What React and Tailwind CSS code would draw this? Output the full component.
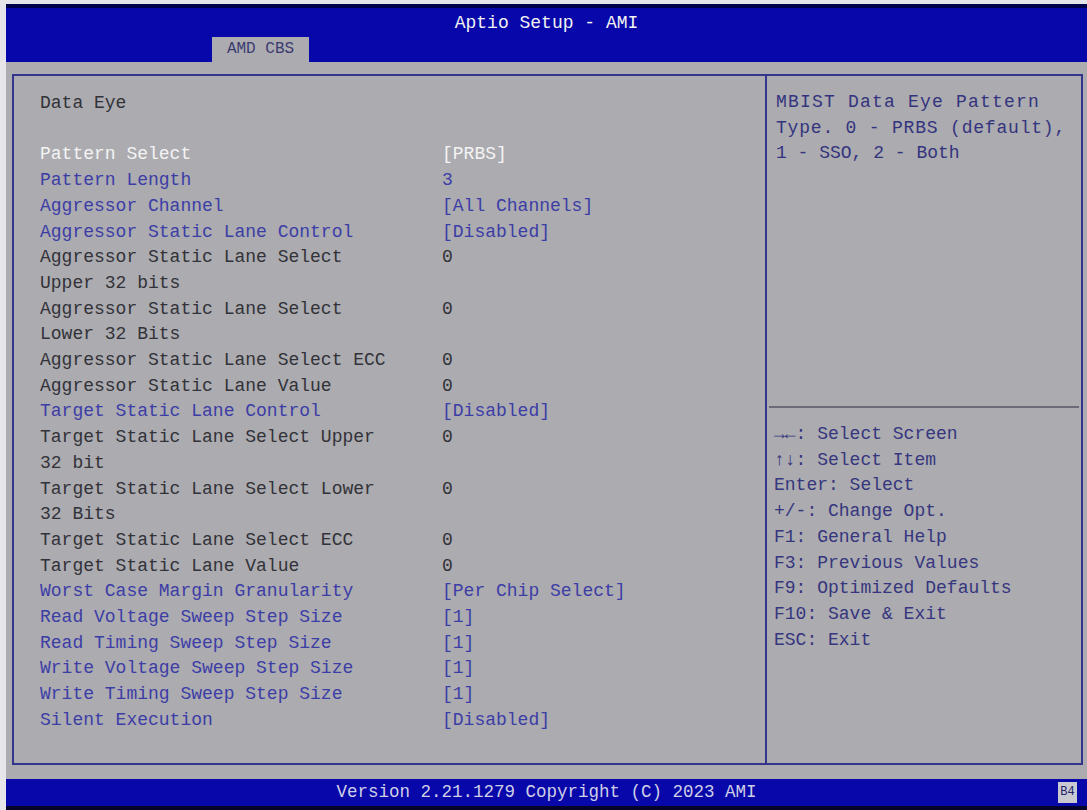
import React from "react";

const rows = [
  { l: "Pattern Select", v: "[PRBS]", c: "sel" },
  { l: "Pattern Length", v: "3", c: "blue" },
  { l: "Aggressor Channel", v: "[All Channels]", c: "blue" },
  { l: "Aggressor Static Lane Control", v: "[Disabled]", c: "blue" },
  { l: "Aggressor Static Lane Select", v: "0", c: "dark" },
  { l: "Upper 32 bits", v: "", c: "dark" },
  { l: "Aggressor Static Lane Select", v: "0", c: "dark" },
  { l: "Lower 32 Bits", v: "", c: "dark" },
  { l: "Aggressor Static Lane Select ECC", v: "0", c: "dark" },
  { l: "Aggressor Static Lane Value", v: "0", c: "dark" },
  { l: "Target Static Lane Control", v: "[Disabled]", c: "blue" },
  { l: "Target Static Lane Select Upper", v: "0", c: "dark" },
  { l: "32 bit", v: "", c: "dark" },
  { l: "Target Static Lane Select Lower", v: "0", c: "dark" },
  { l: "32 Bits", v: "", c: "dark" },
  { l: "Target Static Lane Select ECC", v: "0", c: "dark" },
  { l: "Target Static Lane Value", v: "0", c: "dark" },
  { l: "Worst Case Margin Granularity", v: "[Per Chip Select]", c: "blue" },
  { l: "Read Voltage Sweep Step Size", v: "[1]", c: "blue" },
  { l: "Read Timing Sweep Step Size", v: "[1]", c: "blue" },
  { l: "Write Voltage Sweep Step Size", v: "[1]", c: "blue" },
  { l: "Write Timing Sweep Step Size", v: "[1]", c: "blue" },
  { l: "Silent Execution", v: "[Disabled]", c: "blue" },
];

const colorClass = {
  sel: "text-[#f4f4f4]",
  blue: "text-[#3d3da6]",
  dark: "text-[#323238]",
};

const help = [
  "\u2192\u2190: Select Screen",
  "\u2191\u2193: Select Item",
  "Enter: Select",
  "+/-: Change Opt.",
  "F1: General Help",
  "F3: Previous Values",
  "F9: Optimized Defaults",
  "F10: Save & Exit",
  "ESC: Exit",
];

export default function App() {
  return (
    <div
      className="w-[1087px] h-[810px] bg-[#e6e6ea] pl-[6px] pt-[4px] flex flex-col overflow-hidden text-[18px] leading-[25.7px]"
      style={{ fontFamily: '"Liberation Mono", "DejaVu Sans Mono", monospace' }}
    >
      {/* Header */}
      <div className="h-[58px] bg-[#0707aa] border-t-[4px] border-[#00004a] flex flex-col">
        <div className="h-[29px] flex items-center justify-center text-[#f2f2f2] pt-[2px]">
          Aptio Setup - AMI
        </div>
        <div className="flex-1 flex items-end pl-[206px]">
          <div className="w-[97px] h-[25px] bg-[#ababb0] flex items-center justify-center text-[#3c3c70] text-[16px]">
            AMD CBS
          </div>
        </div>
      </div>

      {/* Body */}
      <div className="flex-1 bg-[#ababb0] pl-[6px] pr-[4px] pt-[12px] pb-[14px] flex flex-col">
        <div className="flex-1 border-2 border-[#34348c] flex">
          {/* Left */}
          <div className="w-[753px] border-r-2 border-[#34348c] pl-[26px] pt-[15px]">
            <div className="text-[#323238]">Data Eye</div>
            <div className="h-[25.7px]" />
            {rows.map((r, i) => (
              <div key={i} className={`flex ${colorClass[r.c]}`}>
                <div className="w-[402px] whitespace-pre">{r.l}</div>
                <div className="whitespace-pre">{r.v}</div>
              </div>
            ))}
          </div>
          {/* Right */}
          <div className="flex-1 flex flex-col">
            <div className="h-[332px] pl-[7px] pt-[14px] text-[#34347e] border-b-2 border-[#6a6a78] mx-[2px]">
              <div className="tracking-[1.2px]">MBIST Data Eye Pattern</div>
              <div className="tracking-[0.8px]">Type. 0 - PRBS (default),</div>
              <div>1 - SSO, 2 - Both</div>
            </div>
            <div className="pl-[7px] pt-[14px] text-[#36367e]">
              {help.map((h, i) => (
                <div key={i} className="whitespace-pre">{h}</div>
              ))}
            </div>
          </div>
        </div>
      </div>

      {/* Footer */}
      <div className="h-[27px] bg-[#0707aa] flex items-center justify-center relative text-[#cfcfe6] text-[17.5px]">
        Version 2.21.1279 Copyright (C) 2023 AMI
        <div className="absolute right-[10px] top-[3px] w-[19px] h-[21px] bg-[#c9c9d2] text-[#22226a] text-[12px] leading-[21px] text-center">
          B4
        </div>
      </div>
      <div className="h-[4px] bg-[#05052a]" />
    </div>
  );
}
